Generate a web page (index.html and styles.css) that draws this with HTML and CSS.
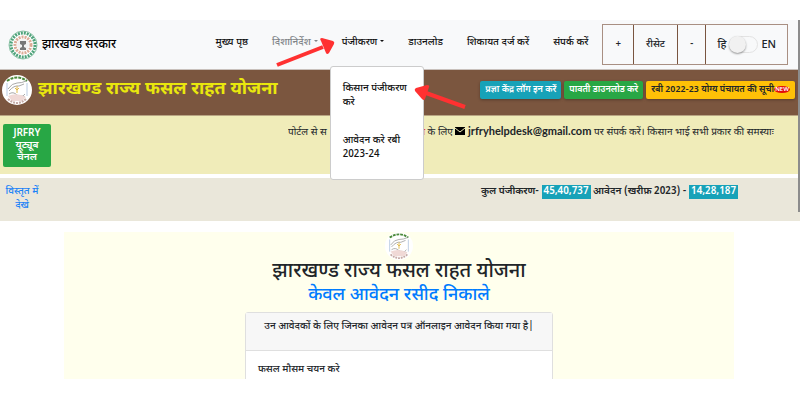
FILE: index.html
```
<!DOCTYPE html>
<html lang="hi">
<head>
    <meta charset="UTF-8">
    <meta name="viewport" content="width=device-width, initial-scale=1.0">
    <title>झारखण्ड राज्य फसल राहत योजना</title>
    <link rel="stylesheet" href="styles.css">
</head>
<body>
    <svg class="defs" aria-hidden="true">
        <symbol id="scheme-logo" viewBox="0 0 30 30">
            <circle cx="15" cy="15" r="15" fill="#fff"/>
            <path d="M5 8V21M25 8V21" stroke="#b9cbe3" fill="none"/>
            <path d="M5 6Q15-1 25 6" stroke="#4b8a3c" stroke-width="2" stroke-dasharray="3 1" fill="none"/>
            <path d="M6 14Q10 8 15 8T24 6M7 16Q12 10 17 11L22 9M7 19Q11 16 15 20T23 19M9 22Q14 19 23 22" stroke="#aaa" fill="none"/>
            <path d="M6 21Q15 17 24 22L20 26H10Z" fill="#f0d9d6"/>
            <path d="M15 18V11M13 13L15 15L17 13" stroke="#e0b94c" fill="none"/>
            <path d="M6 24Q15 32 24 24" stroke="#c5aaa5" stroke-width="2" stroke-dasharray="2 1" fill="none"/>
        </symbol>
    </svg>

    <div class="screen">
        <nav class="navbar">
            <a href="#" class="brand">
                <svg class="emblem" viewBox="0 0 30 30" aria-hidden="true">
                    <circle cx="15" cy="15" r="14" fill="#fff" stroke="#8fc4a8"/>
                    <circle cx="15" cy="15" r="12" fill="none" stroke="#4fa37b" stroke-width="3" stroke-dasharray="2 1"/>
                    <circle cx="15" cy="15" r="8" fill="none" stroke="#dcab97" stroke-width="3" stroke-dasharray="2 1"/>
                    <circle cx="15" cy="15" r="6" fill="#f2f2f2"/>
                    <path d="M12 11H18V14L16 15V17L18 18V20H12V18L14 17V15L12 14Z" fill="#777"/>
                </svg>
                झारखण्ड सरकार
            </a>
            <div class="menu">
                <a href="#">मुख्य पृष्ठ</a>
                <a href="#" class="caret muted">दिशानिर्देश</a>
                <div class="dropdown">
                    <a href="#" class="caret">पंजीकरण</a>
                    <div class="dropdown-menu">
                        <a href="#">किसान पंजीकरण करे</a>
                        <a href="#">आवेदन करे रबी 2023-24</a>
                    </div>
                </div>
                <a href="#">डाउनलोड</a>
                <a href="#">शिकायत दर्ज करें</a>
                <a href="#">संपर्क करें</a>
            </div>
            <div class="tools">
                <button type="button">+</button>
                <button type="button">रीसेट</button>
                <button type="button">-</button>
                <label class="language">हि <input type="checkbox" class="switch" aria-label="Language"> EN</label>
            </div>
        </nav>

        <header class="banner">
            <svg class="logo" aria-hidden="true"><use href="#scheme-logo"/></svg>
            <h1>झारखण्ड राज्य फसल राहत योजना</h1>
            <div class="actions">
                <button type="button" class="btn info">प्रज्ञा केंद्र लॉग इन करें</button>
                <button type="button" class="btn success">पावती डाउनलोड करे</button>
                <button type="button" class="btn warning">रबी 2022-23 योग्य पंचायत की सूची<span class="new">NEW</span></button>
            </div>
        </header>

        <section class="notice">
            <button type="button" class="btn success channel">JRFRY यूट्यूब चैनल</button>
            <p class="ticker">
                <span class="lead">पोर्टल से स <span class="red">सहायता</span></span>
                के लिए
                <svg class="mail" viewBox="0 0 10 8" aria-hidden="true"><path d="M0 0H10V8H0Z"/><path d="M0 1L5 5L10 1" fill="none" stroke="#f0ecb9"/></svg>
                <b>jrfryhelpdesk@gmail.com</b> पर संपर्क करें। किसान भाई सभी प्रकार की समस्याः
            </p>
        </section>

        <section class="counts">
            <a href="#">विस्तृत में देखे</a>
            <p>कुल पंजीकरण- <span class="badge">45,40,737</span> आवेदन (खरीफ़ 2023) - <span class="badge">14,28,187</span></p>
        </section>

        <main class="receipt">
            <svg class="receipt-logo" aria-hidden="true"><use href="#scheme-logo"/></svg>
            <h2>झारखण्ड राज्य फसल राहत योजना</h2>
            <h3>केवल आवेदन रसीद निकाले</h3>
            <div class="card">
                <div class="card-header">उन आवेदकों के लिए जिनका आवेदन पत्र ऑनलाइन आवेदन किया गया है|</div>
                <div class="card-body">फसल मौसम चयन करे</div>
            </div>
        </main>

        <div class="scrollbar"></div>
    </div>

    <svg class="arrow arrow-menu" viewBox="0 0 60 32" aria-hidden="true">
        <path d="M2 27L48 9" stroke="#ff3131" stroke-width="4"/>
        <path d="M47 0Q44 0 46 3L51 15Q52 17 54 15L59 6Q60 4 58 3Z" fill="#ff3131"/>
    </svg>
    <svg class="arrow arrow-item" viewBox="0 0 54 26" aria-hidden="true">
        <path d="M51 22L12 8" stroke="#ff3131" stroke-width="4"/>
        <path d="M13 0Q16 0 15 2L11 14Q10 16 8 14L1 6Q0 4 2 3Z" fill="#ff3131"/>
    </svg>
</body>
</html>
```
FILE: styles.css
```
* {
    box-sizing: border-box;
}
body {
    margin: 0;
    background: #fff;
    color: #212529;
    font-family: "Noto Sans Devanagari", "Noto Sans", sans-serif;
    font-size: 10px;
    line-height: 14px;
}
a {
    color: inherit;
    text-decoration: none;
}
h1, h2, h3, p {
    margin: 0;
}
button {
    font: inherit;
    color: inherit;
}
.defs {
    display: none;
}
.screen {
    position: relative;
    height: calc(100vh - 41px);
    margin: 20px 0;
    overflow: hidden;
}

/* navbar */
.navbar {
    display: flex;
    align-items: center;
    height: 50px;
    padding: 0 12px 0 8px;
    background: #f8f9fa;
    border-bottom: 1px solid #c9c1bc;
    font-weight: 500;
    white-space: nowrap;
}
.brand {
    display: flex;
    align-items: center;
    gap: 4px;
    color: #000;
    font-size: 12px;
}
.emblem {
    width: 30px;
    height: 30px;
}
.menu {
    display: flex;
    gap: 24px;
    margin: 0 14px 4px auto;
    color: #111;
}
.dropdown {
    position: relative;
}
.muted {
    color: #808488;
}
.caret::after {
    content: "";
    display: inline-block;
    margin-left: 3px;
    vertical-align: 3px;
    border: 2px solid transparent;
    border-top-color: currentColor;
    border-bottom: 0;
}
.dropdown-menu {
    position: absolute;
    top: 30px;
    left: -12px;
    z-index: 2;
    display: flex;
    flex-direction: column;
    gap: 24px;
    width: 94px;
    padding: 15px 8px 17px 12px;
    background: #fff;
    border: 1px solid #ccc;
    border-radius: 3px;
    white-space: normal;
}
.tools {
    display: flex;
    height: 41px;
    border: 1px solid #a88f82;
}
.tools button {
    padding: 0 12px;
    background: none;
    border: 0;
    border-right: 1px solid #795540;
}
.language {
    display: flex;
    align-items: center;
    gap: 3px;
    padding: 0 11px;
    font-size: 11px;
}
.switch {
    appearance: none;
    width: 29px;
    height: 17px;
    margin: 0;
    border: 1px solid #e3e3e3;
    border-radius: 9px;
}
.switch::before {
    content: "";
    display: block;
    width: 17px;
    height: 17px;
    margin: -1px;
    border-radius: 50%;
    background: #f1f1f1;
    box-shadow: 0 1px 2px rgba(0, 0, 0, 0.4);
}

/* title bar */
.banner {
    display: flex;
    align-items: center;
    height: 45px;
    padding: 0 5px 6px 2px;
    background: #7b563f;
    white-space: nowrap;
}
.logo {
    width: 30px;
    height: 30px;
    margin-right: 6px;
}
h1 {
    color: #e9e70d;
    font-size: 18px;
    line-height: 24px;
}
.actions {
    display: flex;
    gap: 3px;
    margin-left: auto;
}
.btn {
    height: 18px;
    padding: 0 5px;
    border: 0;
    border-radius: 2px;
    color: #fff;
    font-size: 9px;
    font-weight: 600;
    box-shadow: 0 1px 3px rgba(0, 0, 0, 0.3);
}
.info {
    background: #17a2b8;
}
.success {
    background: #28a745;
}
.warning {
    background: #ffc107;
    color: #212529;
}
.new {
    display: inline-block;
    padding: 0 1px;
    border-radius: 50%;
    background: #e20b0b;
    color: #fff;
    font-size: 6px;
    line-height: 7px;
    vertical-align: 1px;
}

/* notice */
.notice {
    display: flex;
    align-items: flex-start;
    justify-content: space-between;
    height: 59px;
    padding: 8px 20px 0 3px;
    background: #f0ecb9;
    border-top: 1px solid #b9a583;
}
.channel {
    width: 48px;
    height: 43px;
    font-size: 10px;
    line-height: 12px;
    box-shadow: none;
}
.ticker {
    width: 492px;
    overflow: hidden;
    white-space: nowrap;
}
.ticker b {
    font-family: Lato, sans-serif;
    font-size: 11px;
}
.lead {
    display: inline-flex;
    justify-content: space-between;
    width: 137px;
}
.red {
    color: #dc1c2c;
}
.mail {
    width: 10px;
    height: 8px;
}

/* totals */
.counts {
    display: flex;
    justify-content: space-between;
    height: 43px;
    margin: 4px 0 11px;
    padding: 7px 62px 0 3px;
    background: #eae7da;
    font-weight: 600;
}
.counts a {
    width: 38px;
    color: #1a82f7;
    text-align: center;
    font-weight: 500;
}
.badge {
    display: inline-block;
    padding: 0 2px;
    background: #17a2b8;
    color: #fff;
}

/* receipt */
.receipt {
    margin: 0 66px 0 64px;
    background: #ffffed;
    text-align: center;
}
.receipt-logo {
    display: block;
    width: 28px;
    height: 28px;
    margin: 0 auto;
}
h2, h3 {
    font-size: 20px;
    line-height: 24px;
    font-weight: 500;
}
h3 {
    color: #007bff;
    font-size: 18px;
}
.card {
    width: 46%;
    margin: 4px auto 0;
    background: #fff;
    border: 1px solid #dfdfdf;
    border-radius: 3px;
    font-weight: 500;
}
.card-header {
    height: 38px;
    padding-top: 7px;
    background: #f7f7f7;
    border-bottom: 1px solid #dfdfdf;
    white-space: nowrap;
}
.card-body {
    height: 80px;
    padding: 12px;
    text-align: left;
}
.scrollbar {
    position: absolute;
    top: 0;
    right: 0;
    width: 2px;
    height: 192px;
    background: #8c8c8c;
}

/* pointers */
.arrow {
    position: absolute;
    z-index: 3;
}
.arrow-menu {
    top: 38px;
    left: 275px;
    width: 60px;
    height: 32px;
}
.arrow-item {
    top: 85px;
    left: 414px;
    width: 54px;
    height: 26px;
}
```
